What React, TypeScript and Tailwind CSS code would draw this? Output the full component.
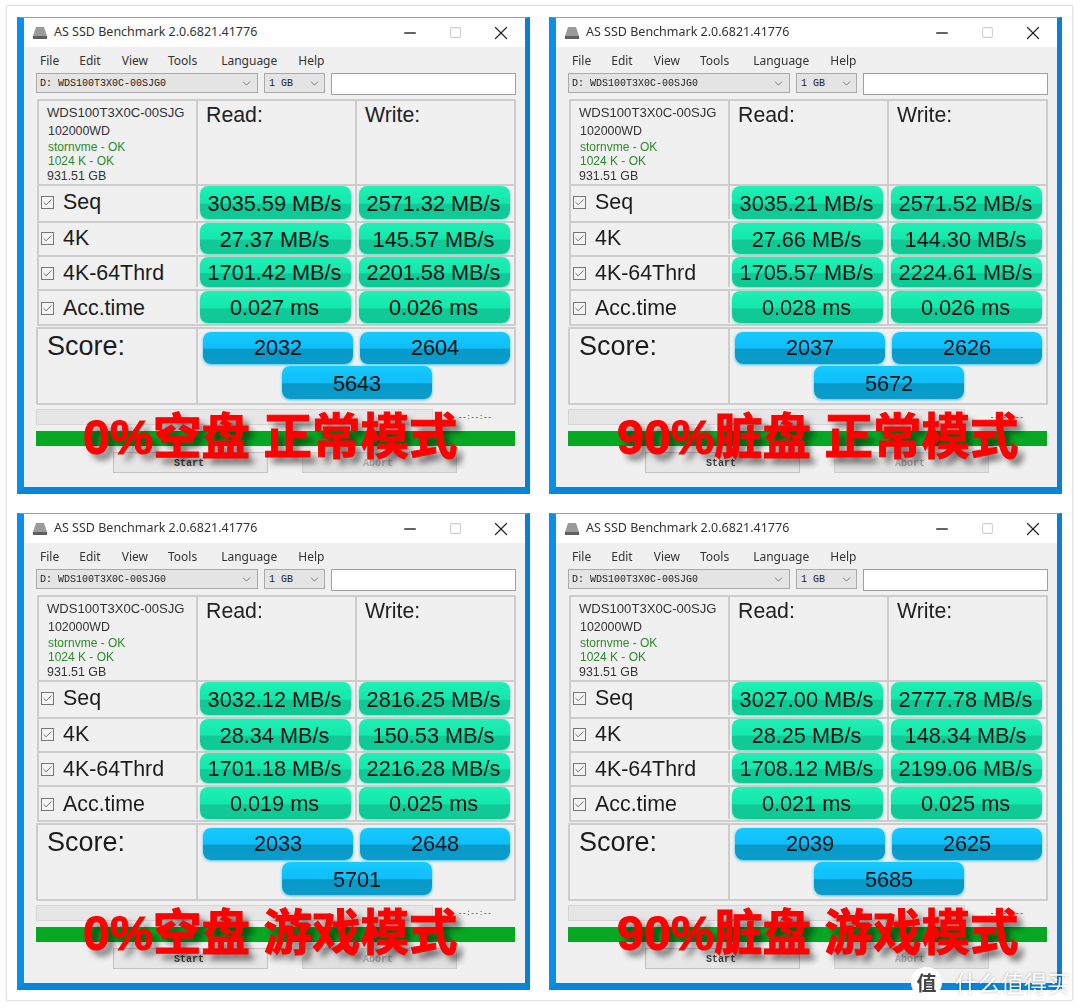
import React from 'react';
import { Check, ChevronDown, Minus, Square, X } from 'lucide-react';

interface Run {
  banner: string;
  bannerClass: string;
  results: [string, string][];
  scores: [string, string, string];
}

const rows = ['Seq', '4K', '4K-64Thrd', 'Acc.time'];
const rowHeights = ['h-[37px]', 'h-[34px]', 'h-[34px]', 'h-[35px]'];
const pillHeights = ['h-[33px]', 'h-[31px]', 'h-[30px]', 'h-[32px]'];
const labelOffsets = ['pt-0', 'pt-0', 'pt-[3px]', 'pt-[2px]'];
const menus = [
  { name: 'File', cls: '' },
  { name: 'Edit', cls: '' },
  { name: 'View', cls: 'ml-[1px]' },
  { name: 'Tools', cls: '' },
  { name: 'Language', cls: 'ml-[4px]' },
  { name: 'Help', cls: 'ml-[1px]' },
];

const runs: Run[] = [
  {
    banner: '0%空盘 正常模式',
    bannerClass: 'left-[59px]',
    results: [['3035.59 MB/s', '2571.32 MB/s'], ['27.37 MB/s', '145.57 MB/s'], ['1701.42 MB/s', '2201.58 MB/s'], ['0.027 ms', '0.026 ms']],
    scores: ['2032', '2604', '5643'],
  },
  {
    banner: '90%脏盘 正常模式',
    bannerClass: 'left-[61px]',
    results: [['3035.21 MB/s', '2571.52 MB/s'], ['27.66 MB/s', '144.30 MB/s'], ['1705.57 MB/s', '2224.61 MB/s'], ['0.028 ms', '0.026 ms']],
    scores: ['2037', '2626', '5672'],
  },
  {
    banner: '0%空盘 游戏模式',
    bannerClass: 'left-[59px]',
    results: [['3032.12 MB/s', '2816.25 MB/s'], ['28.34 MB/s', '150.53 MB/s'], ['1701.18 MB/s', '2216.28 MB/s'], ['0.019 ms', '0.025 ms']],
    scores: ['2033', '2648', '5701'],
  },
  {
    banner: '90%脏盘 游戏模式',
    bannerClass: 'left-[61px]',
    results: [['3027.00 MB/s', '2777.78 MB/s'], ['28.25 MB/s', '148.34 MB/s'], ['1708.12 MB/s', '2199.06 MB/s'], ['0.021 ms', '0.025 ms']],
    scores: ['2039', '2625', '5685'],
  },
];

function ResultPill({ value, height }: { value: string; height: string }) {
  return (
    <div className={`flex ${height} w-[151px] items-center justify-center rounded-[8px] bg-[linear-gradient(#1ff0b6_0%,#14e8ac_52%,#10c996_56%,#0fca96_100%)] pr-[2px] pt-[2px] text-[21.7px] leading-none text-[#111] shadow-[0_1px_2px_#5ceac2]`}>
      {value}
    </div>
  );
}

function ScorePill({ value, height, offset = '' }: { value: string; height: string; offset?: string }) {
  return (
    <div className={`flex ${height} ${offset} w-[150px] items-center justify-center rounded-[8px] bg-[linear-gradient(#16cafe_0%,#10befa_50%,#0799c8_54%,#0a9ccb_100%)] text-[21.7px] leading-none text-[#111] shadow-[0_1px_3px_#3cc4f4]`}>
      {value}
    </div>
  );
}

function Benchmark({ run }: { run: Run }) {
  return (
    <div className="relative flex h-[477px] w-[513px] flex-col border-t border-t-[#8ba6ba] border-r-[5px] border-b-[7px] border-l-[7px] border-r-[#0a7fd0] border-b-[#0a85d8] border-l-[#0c8fe6] bg-[#f0f0f0] font-['Liberation_Sans',sans-serif]">
      {/* title bar */}
      <div className="flex h-[29px] shrink-0 items-center bg-white pl-[8px] pr-[13px]">
        <svg width="16" height="14" viewBox="0 0 16 14" className="mr-[6px]">
          <path d="M4 1h8l3 9v3H1v-3z" fill="#9a9a9a" />
          <path d="M1 10h14v3H1z" fill="#5e5e5e" />
        </svg>
        <span className="font-['Noto_Sans',sans-serif] text-[12.5px] text-[#333]">AS SSD Benchmark 2.0.6821.41776</span>
        <Minus size={18} strokeWidth={2} className="ml-auto text-[#333]" />
        <Square size={13} strokeWidth={1.85} className="ml-[30px] text-[#ccc]" />
        <X size={22} strokeWidth={1.3} className="ml-[28px] text-[#222]" />
      </div>

      {/* menu */}
      <div className="flex h-[26px] shrink-0 items-center gap-[20px] pl-[16px] pt-[2px] font-['Noto_Sans',sans-serif] text-[12px] text-[#333]">
        {menus.map((m) => (
          <span key={m.name} className={m.cls}>{m.name}</span>
        ))}
      </div>

      {/* drive pickers */}
      <div className="flex shrink-0 items-start pl-[12px]">
        <div className="flex h-[20px] w-[222px] items-center justify-between border border-[#a9a9a9] bg-[#e4e4e4] pl-[3px] pr-[4px] font-['Liberation_Mono',monospace] text-[10px] text-[#222]">
          D: WDS100T3X0C-00SJG0
          <ChevronDown size={13} strokeWidth={1.3} className="text-[#555]" />
        </div>
        <div className="ml-[6px] flex h-[20px] w-[61px] items-center justify-between border border-[#a9a9a9] bg-[#e4e4e4] pl-[4px] pr-[3px] font-['Liberation_Mono',monospace] text-[10px] text-[#222]">
          1 GB
          <ChevronDown size={13} strokeWidth={1.3} className="text-[#555]" />
        </div>
        <div className="ml-[6px] h-[22px] w-[185px] border border-[#a0a0a0] bg-white" />
      </div>

      {/* results table */}
      <div className="ml-[13px] mt-[4px] w-[479px] shrink-0 border-[2px] border-[#cdcdcd]">
        <div className="grid h-[83px] grid-cols-[159px_159px_1fr] divide-x-2 divide-[#cdcdcd]">
          <div className="pl-[8px] pt-[3px]">
            <div className="text-[13.1px] leading-[18px] text-[#333]">WDS100T3X0C-00SJG</div>
            <div className="pl-[1px] text-[12.4px] leading-[18px] text-[#333]">102000WD</div>
            <div className="pl-[1px] text-[12px] leading-[14px] text-[#2d8a2d]">stornvme - OK</div>
            <div className="pl-[1px] text-[12px] leading-[15px] text-[#2d8a2d]">1024 K - OK</div>
            <div className="text-[12.4px] leading-[15px] text-[#333]">931.51 GB</div>
          </div>
          <div className="pl-[8px] pt-[1px] text-[21.3px] leading-[26px] text-[#222]">Read:</div>
          <div className="pl-[8px] pt-[1px] text-[21.3px] leading-[26px] text-[#222]">Write:</div>
        </div>
        {rows.map((label, i) => (
          <div key={label} className={`grid ${rowHeights[i]} grid-cols-[159px_159px_1fr] divide-x-2 divide-[#cdcdcd] border-t-2 border-[#cdcdcd]`}>
            <div className={`flex ${pillHeights[i]} ${labelOffsets[i]} items-center pl-[2px] text-[21.4px] text-[#1c1c1c]`}>
              <span className="mr-[9px] flex h-[13px] w-[13px] items-center justify-center border border-[#777] bg-[#f4f4f4]">
                <Check size={11} strokeWidth={1.6} className="text-[#444]" />
              </span>
              {label}
            </div>
            <div className="pl-[2px]">
              <ResultPill value={run.results[i][0]} height={pillHeights[i]} />
            </div>
            <div className="pl-[2px]">
              <ResultPill value={run.results[i][1]} height={pillHeights[i]} />
            </div>
          </div>
        ))}
      </div>

      {/* score */}
      <div className="ml-[12px] mt-[1px] grid h-[78px] w-[480px] shrink-0 grid-cols-[160px_1fr] divide-x-2 divide-[#cdcdcd] border-[2px] border-[#cdcdcd]">
        <div className="pl-[9px] pt-[1px] text-[27px] leading-[32px] text-[#1c1c1c]">Score:</div>
        <div className="flex flex-col pt-[3px]">
          <div className="flex gap-[7px] pl-[5px]">
            <ScorePill value={run.scores[0]} height="h-[32px]" />
            <ScorePill value={run.scores[1]} height="h-[32px]" />
          </div>
          <div className="mt-[2px] pl-[84px]">
            <ScorePill value={run.scores[2]} height="h-[33px]" offset="pt-[3px]" />
          </div>
        </div>
      </div>

      {/* progress */}
      <div className="ml-[12px] mt-[4px] flex shrink-0 items-center">
        <div className="h-[16px] w-[397px] border border-[#d4d4d4] bg-[#e6e6e6]" />
        <span className="ml-[25px] font-['Liberation_Mono',monospace] text-[7px] font-bold leading-none text-[#666]">--:--:--</span>
      </div>
      <div className="ml-[12px] mt-[6px] h-[15px] w-[479px] shrink-0 bg-[#06a823]" />

      {/* buttons */}
      <div className="ml-[89px] mt-[6px] flex shrink-0 gap-[34px]">
        <div className="flex h-[21px] w-[155px] items-center justify-center border border-[#c2c2c2] bg-[#e6e6e6] pr-[3px] pt-[2px] font-['Liberation_Mono',monospace] text-[10px] font-bold text-[#444]">Start</div>
        <div className="flex h-[21px] w-[155px] items-center justify-center border border-[#cfcfcf] bg-[#e0e0e0] pr-[3px] pt-[2px] font-['Liberation_Mono',monospace] text-[10px] font-bold text-[#aaa]">Abort</div>
      </div>

      {/* banner laid over the window */}
      <div className={`absolute top-[390px] ${run.bannerClass} whitespace-nowrap font-['Liberation_Sans','Noto_Sans_CJK_SC',sans-serif] text-[48.5px] font-bold leading-[58px] text-[#fe0000] [-webkit-text-stroke:1px_#fe0000] [text-shadow:6px_6px_6px_rgba(0,0,0,0.55)]`}>
        {run.banner}
      </div>
    </div>
  );
}

export default function App() {
  return (
    <div className="relative h-[1008px] w-[1080px] overflow-hidden bg-white pl-[6px] pt-[5px]">
      <div className="h-[996px] w-[1067px] rounded-[2px] border border-[#e2e2e2] bg-white pl-[10px] pt-[11px] shadow-[0_0_2px_#ddd]">
        <div className="grid grid-cols-[513px_513px] gap-x-[19px] gap-y-[19px] blur-[0.4px]">
          {runs.map((run) => (
            <Benchmark key={run.banner} run={run} />
          ))}
        </div>
      </div>

      {/* site watermark */}
      <div className="absolute left-[911px] top-[967px] flex items-center gap-[13px] font-['Noto_Sans_CJK_SC',sans-serif] text-white">
        <span className="flex h-[31px] w-[31px] items-center justify-center rounded-full bg-white text-[20px] font-bold leading-none text-[#444]">值</span>
        <span className="text-[23px] leading-none opacity-90 [text-shadow:0_0_3px_rgba(0,0,0,0.35)]">什么值得买</span>
      </div>
    </div>
  );
}
